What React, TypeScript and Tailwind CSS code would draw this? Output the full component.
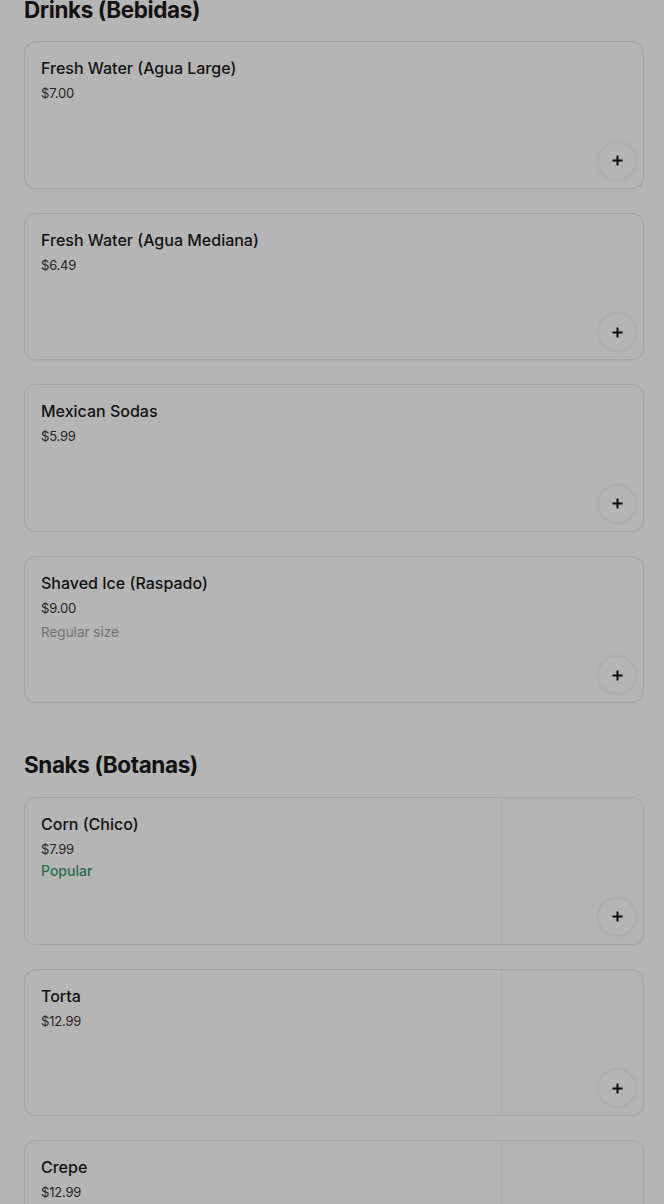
import React from "react";

type Item = { name: string; price: string; note?: string; popular?: boolean; image?: boolean };

const drinks: Item[] = [
  { name: "Fresh Water (Agua Large)", price: "$7.00" },
  { name: "Fresh Water (Agua Mediana)", price: "$6.49" },
  { name: "Mexican Sodas", price: "$5.99" },
  { name: "Shaved Ice (Raspado)", price: "$9.00", note: "Regular size" },
];

const snacks: Item[] = [
  { name: "Corn (Chico)", price: "$7.99", popular: true, image: true },
  { name: "Torta", price: "$12.99", image: true },
  { name: "Crepe", price: "$12.99", image: true },
];

function Card({ item }: { item: Item }) {
  return (
    <div className="relative flex h-[147.5px] overflow-hidden rounded-xl border border-[#e8e8e8] bg-white shadow-[0_1px_2px_rgba(0,0,0,0.04)]">
      <div className="flex flex-1 flex-col px-4 pt-4">
        <div className="text-[16px] font-medium leading-5 text-[#1a1a1a]">{item.name}</div>
        <div className="mt-[5px] text-[13px] leading-5 tracking-[-0.2px] text-[#333]">{item.price}</div>
        {item.note && <div className="mt-1 text-[13.5px] leading-5 text-[#a0a0a0]">{item.note}</div>}
        {item.popular && <div className="mt-[2px] text-[14px] font-medium leading-5 text-[#3a9a6a]">Popular</div>}
      </div>
      {item.image && <div className="w-[142px] border-l border-[#f2f2f2] bg-[#fdfdfd]" />}
      <button className="absolute bottom-[9px] right-[8px] flex h-9 w-9 items-center justify-center rounded-full bg-white shadow-[0_0_5px_rgba(0,0,0,0.1)]">
        <svg width="11" height="11" viewBox="0 0 11 11">
          <path d="M5.5 0.5v10M0.5 5.5h10" stroke="#111" strokeWidth="2" />
        </svg>
      </button>
    </div>
  );
}

export default function App() {
  return (
    <div className="relative min-h-[1204px] bg-white pl-6 pr-5 font-['Inter','Noto_Sans',sans-serif]">
      <h2 className="-mt-[6px] mb-[15px] text-[22.5px] font-bold leading-8 tracking-[-0.4px] text-[#1a1a1a]">Drinks (Bebidas)</h2>
      <div className="flex flex-col gap-6">
        {drinks.map((d) => (
          <Card key={d.name} item={d} />
        ))}
      </div>
      <h2 className="mt-[46px] mb-4 text-[22.5px] font-bold leading-8 tracking-[-0.4px] text-[#1a1a1a]">Snaks (Botanas)</h2>
      <div className="flex flex-col gap-6">
        {snacks.map((d) => (
          <Card key={d.name} item={d} />
        ))}
      </div>
      <div className="fixed inset-0 bg-black/[0.29]" />
    </div>
  );
}
